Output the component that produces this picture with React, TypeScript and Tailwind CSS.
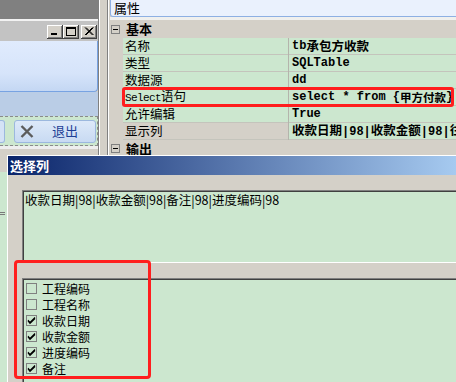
import React from "react";

const raised =
  "bg-[#d4d0c8] shadow-[inset_-1px_-1px_#404040,inset_1px_1px_#ffffff,inset_-2px_-2px_#808080]";

function CapBtn({ kind }: { kind: "min" | "max" | "close" }) {
  return (
    <div className={`w-[16px] h-[14px] flex items-center justify-center ${raised}`}>
      {kind === "min" && (
        <svg width="10" height="9" viewBox="0 0 10 9">
          <rect x="1" y="6" width="6" height="2" fill="#000" />
        </svg>
      )}
      {kind === "max" && (
        <svg width="10" height="9" viewBox="0 0 10 9">
          <rect x="0.5" y="0.5" width="9" height="8" fill="none" stroke="#000" />
          <rect x="0" y="0" width="10" height="2" fill="#000" />
        </svg>
      )}
      {kind === "close" && (
        <svg width="10" height="9" viewBox="0 0 10 9">
          <path d="M1 0.5 L8.5 8 M2 0.5 L9.5 8 M8.5 0.5 L1 8 M9.5 0.5 L2 8" stroke="#000" strokeWidth="1" />
        </svg>
      )}
    </div>
  );
}

function Minus() {
  return (
    <div className="w-[9px] h-[9px] border border-[#808080] flex items-center justify-center shrink-0">
      <div className="w-[5px] h-[1px] bg-black" />
    </div>
  );
}

type Row = { name: React.ReactNode; value: React.ReactNode; grayName?: boolean };

const mono = "font-['Liberation_Mono','Noto_Sans_CJK_SC',monospace]";
const cjk = "font-['Noto_Sans_CJK_SC','Noto_Sans',sans-serif]";

const rows: Row[] = [
  { name: "名称", value: <>tb<span className={`${cjk} text-[12.5px]`}>承包方收款</span></> },
  { name: "类型", value: "SQLTable" },
  { name: "数据源", value: "dd" },
  {
    name: (
      <>
        <span className={`${mono} text-[11px] tracking-[-0.6px]`}>Select</span>语句
      </>
    ),
    value: (
      <>
        select * from {"{"}
        <span className={`${cjk} text-[11.5px]`}>甲方付款</span>
        {"}"}
      </>
    ),
  },
  { name: "允许编辑", value: "True" },
  {
    name: "显示列",
    grayName: true,
    value: (
      <span className={`${cjk} text-[12.5px]`}>
        收款日期<span className={mono + " text-[12px]"}>|98|</span>收款金额
        <span className={mono + " text-[12px]"}>|98|</span>往来
      </span>
    ),
  },
];

const items: { label: string; checked: boolean }[] = [
  { label: "工程编码", checked: false },
  { label: "工程名称", checked: false },
  { label: "收款日期", checked: true },
  { label: "收款金额", checked: true },
  { label: "进度编码", checked: true },
  { label: "备注", checked: true },
];

export default function App() {
  return (
    <div className={`relative w-[456px] h-[382px] overflow-hidden bg-[#d4d0c8] text-black ${cjk}`}>
      <div className="flex h-full">
        {/* left background window */}
        <div className="w-[98px] shrink-0 flex flex-col">
          <div className="h-[19px] bg-[#808080]" />
          <div className="h-[2px] bg-[#f2f2f2]" />
          <div className="h-[20px] bg-[#c3c3c3] flex items-center justify-end pr-[1px] pt-[1px]">
            <CapBtn kind="min" />
            <CapBtn kind="max" />
            <div className="w-[2px]" />
            <CapBtn kind="close" />
          </div>
          <div className="h-[51px] rounded-br-[4px] border-r border-b border-[#78a3e2] bg-[linear-gradient(#e0ebfd,#d6e4fa_65%,#c4d7f3)]" />
          <div className="h-[24px] bg-[#bacde6]" />
          <div className="h-[30px] bg-[#cce7cf] border-t border-b border-r border-dashed border-[#8a8a8a] flex items-center">
            <div className="w-[5px] h-[23px] rounded-r-[3px] border-r border-t border-b border-[#9cb8de] bg-[#d4e2f6]" />
            <div className="ml-[9px] w-[82px] h-[23px] rounded-[3px] border border-[#9cb8de] bg-[linear-gradient(#dde9f9,#c8daf2)] flex items-center">
              <svg className="ml-[5px]" width="14" height="13" viewBox="0 0 14 13">
                <path d="M1.5 1 L12.5 12 M12.5 1 L1.5 12" stroke="#5c5c5c" strokeWidth="2.4" />
              </svg>
              <span className="ml-[18px] text-[13px] leading-[16px] text-[#1d3f96]">退出</span>
            </div>
          </div>
          <div className="h-[3px] bg-[#eeeeee]" />
          <div className="h-[23px] bg-[#d4d0c8]" />
          <div className="flex-1 bg-[#cce7cf] flex flex-col">
            <div className="mt-[40px] w-[5px] h-[1px] bg-[#7a7a7a]" />
            <div className="mt-[1px] w-[5px] h-[1px] bg-[#7a7a7a]" />
          </div>
        </div>

        {/* splitter */}
        <div className="w-[12px] shrink-0 flex">
          <div className="w-[1px] bg-[#808080]" />
          <div className="w-[1px] bg-[#ffffff]" />
          <div className="w-[7px] bg-[#d4d0c8]" />
          <div className="w-[1px] bg-[#808080]" />
          <div className="w-[1px] bg-[#ffffff]" />
          <div className="w-[1px] bg-[#d4d0c8]" />
        </div>

        {/* property grid */}
        <div className="flex-1 flex flex-col">
          <div className="h-[17px] flex items-center justify-between bg-[#eaf1fd] border-l border-b border-r border-[#8eb0e3] rounded-bl-[3px] pl-[3px] pr-[6px]">
            <span className="text-[13px] leading-[16px]">属性</span>
            <svg width="9" height="10" viewBox="0 0 9 10">
              <path d="M2.5 0.5 V6 M2.5 0.5 H6 M6 0.5 V6" stroke="#000" strokeWidth="1" fill="none" />
              <rect x="5.5" y="0" width="2" height="6.5" fill="#000" />
              <rect x="0" y="6" width="9" height="1" fill="#000" />
              <rect x="4" y="7" width="1" height="3" fill="#000" />
            </svg>
          </div>
          <div className="h-[3px] bg-[#f0f0ee] border-r border-[#404040]" />
          <div className="flex-1 flex flex-col border-r border-[#404040]">
            <div className="h-[18px] flex items-center pl-[1px]">
              <Minus />
              <span className="ml-[6px] text-[13px] font-bold leading-[16px]">基本</span>
            </div>
            {rows.map((r, i) => (
              <div key={i} className="h-[17px] flex">
                <div className="w-[13px] shrink-0" />
                <div
                  className={`w-[165px] shrink-0 flex items-center pl-[2px] text-[12.5px] leading-[16px] border-b border-[#c4c4bc] ${
                    r.grayName ? "bg-[#d4d0c8]" : "bg-[#cce7cf]"
                  }`}
                >
                  <span className="whitespace-nowrap">{r.name}</span>
                </div>
                <div className="w-[1px] bg-[#b4b4ac]" />
                <div
                  className={`flex-1 min-w-0 overflow-hidden flex items-center pl-[3px] bg-[#cce7cf] border-b border-[#c4c4bc] ${mono} text-[12px] font-bold leading-[16px] whitespace-nowrap`}
                >
                  {r.value}
                </div>
              </div>
            ))}
            <div className="h-[17px] flex items-center pl-[1px]">
              <Minus />
              <span className="ml-[6px] text-[13px] font-bold leading-[16px]">输出</span>
            </div>
          </div>
        </div>
      </div>

      {/* red annotation on Select row */}
      <div className="absolute left-[122px] top-[87px] w-[332px] h-[20px] border-[3px] border-[#ff1e1e] rounded-[3px]" />

      {/* dialog */}
      <div className="absolute left-[7px] top-[155px] right-0 bottom-0 bg-[#d4d0c8] border-l border-t border-white flex flex-col">
        <div className="h-[19px] shrink-0 flex items-center pl-[2px] bg-[linear-gradient(to_right,#0a246a,#a6caf0)]">
          <span className="text-white font-bold text-[13px] leading-[16px]">选择列</span>
        </div>
        <div className="flex-1 flex flex-col pl-[14px] pt-[15px]">
          <div className="h-[73px] shrink-0 border-t border-l border-[#808080] border-b border-b-white">
            <div className="h-full border-t border-l border-[#404040] bg-[#cce7cf] pl-[1px] pt-[1px]">
              <div className="text-[12.5px] leading-[14px] whitespace-nowrap">
                收款日期|98|收款金额|98|备注|98|进度编码|98
              </div>
            </div>
          </div>
          <div className="mt-[15px] flex-1 border-t border-l border-[#808080]">
            <div className="h-full border-t border-l border-[#404040] bg-[#cce7cf] pl-[2px] flex flex-col">
              {items.map((it) => (
                <div key={it.label} className="h-[16px] flex items-center">
                  <div className="w-[11px] h-[11px] border border-[#808080] flex items-center justify-center shrink-0">
                    {it.checked && (
                      <svg width="9" height="9" viewBox="0 0 9 9">
                        <path d="M1 4 L3 6.5 L8 1.5 M1 5 L3 7.5 L8 2.5" stroke="#000" strokeWidth="1.1" fill="none" />
                      </svg>
                    )}
                  </div>
                  <span className="ml-[5px] text-[12px] leading-[15px]">{it.label}</span>
                </div>
              ))}
            </div>
          </div>
        </div>
      </div>

      {/* red annotation on list */}
      <div className="absolute left-[14px] top-[260px] w-[137px] h-[119px] border-[3px] border-[#ff1e1e] rounded-[4px]" />
    </div>
  );
}
